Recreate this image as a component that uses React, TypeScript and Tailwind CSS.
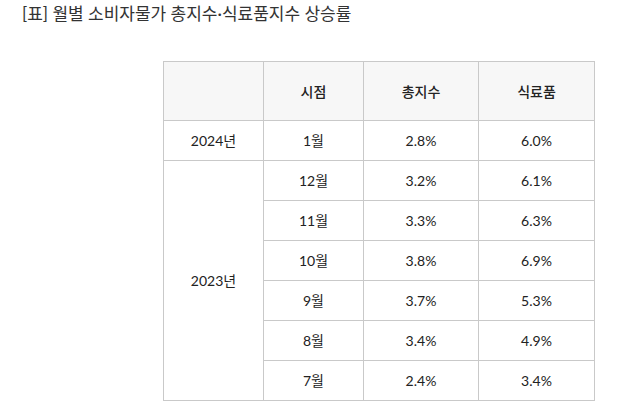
const rows2023 = [
  { month: '12월', total: '3.2%', food: '6.1%' },
  { month: '11월', total: '3.3%', food: '6.3%' },
  { month: '10월', total: '3.8%', food: '6.9%' },
  { month: '9월', total: '3.7%', food: '5.3%' },
  { month: '8월', total: '3.4%', food: '4.9%' },
  { month: '7월', total: '2.4%', food: '3.4%' },
];

const cell = 'border border-[#c9c9c9] text-center align-middle h-[40px] p-0';

export default function App() {
  return (
    <div
      className="w-[640px] h-[405px] bg-white text-[#333] overflow-hidden"
      style={{ fontFamily: 'Lato, "Noto Sans CJK KR", sans-serif' }}
    >
      <h1 className="pl-[22px] pt-[4px] text-[17px] leading-[20px] font-normal text-[#333]">
        [표] 월별 소비자물가 총지수·식료품지수 상승률
      </h1>

      <div className="pl-[163px] pt-[37px]">
        <table className="border-collapse text-[14px] text-[#222]">
          <colgroup>
            <col className="w-[100px]" />
            <col className="w-[100px]" />
            <col className="w-[115px]" />
            <col className="w-[116px]" />
          </colgroup>
          <thead>
            <tr className="bg-[#f7f7f7]">
              <th className={`${cell} h-[59px]`}></th>
              <th className={`${cell} h-[59px] font-medium`}>시점</th>
              <th className={`${cell} h-[59px] font-medium`}>총지수</th>
              <th className={`${cell} h-[59px] font-medium`}>식료품</th>
            </tr>
          </thead>
          <tbody>
            <tr>
              <td className={cell}>2024년</td>
              <td className={cell}>1월</td>
              <td className={cell}>2.8%</td>
              <td className={cell}>6.0%</td>
            </tr>
            {rows2023.map((r, i) => (
              <tr key={r.month}>
                {i === 0 && (
                  <td className={cell} rowSpan={rows2023.length}>
                    2023년
                  </td>
                )}
                <td className={cell}>{r.month}</td>
                <td className={cell}>{r.total}</td>
                <td className={cell}>{r.food}</td>
              </tr>
            ))}
          </tbody>
        </table>
      </div>
    </div>
  );
}
